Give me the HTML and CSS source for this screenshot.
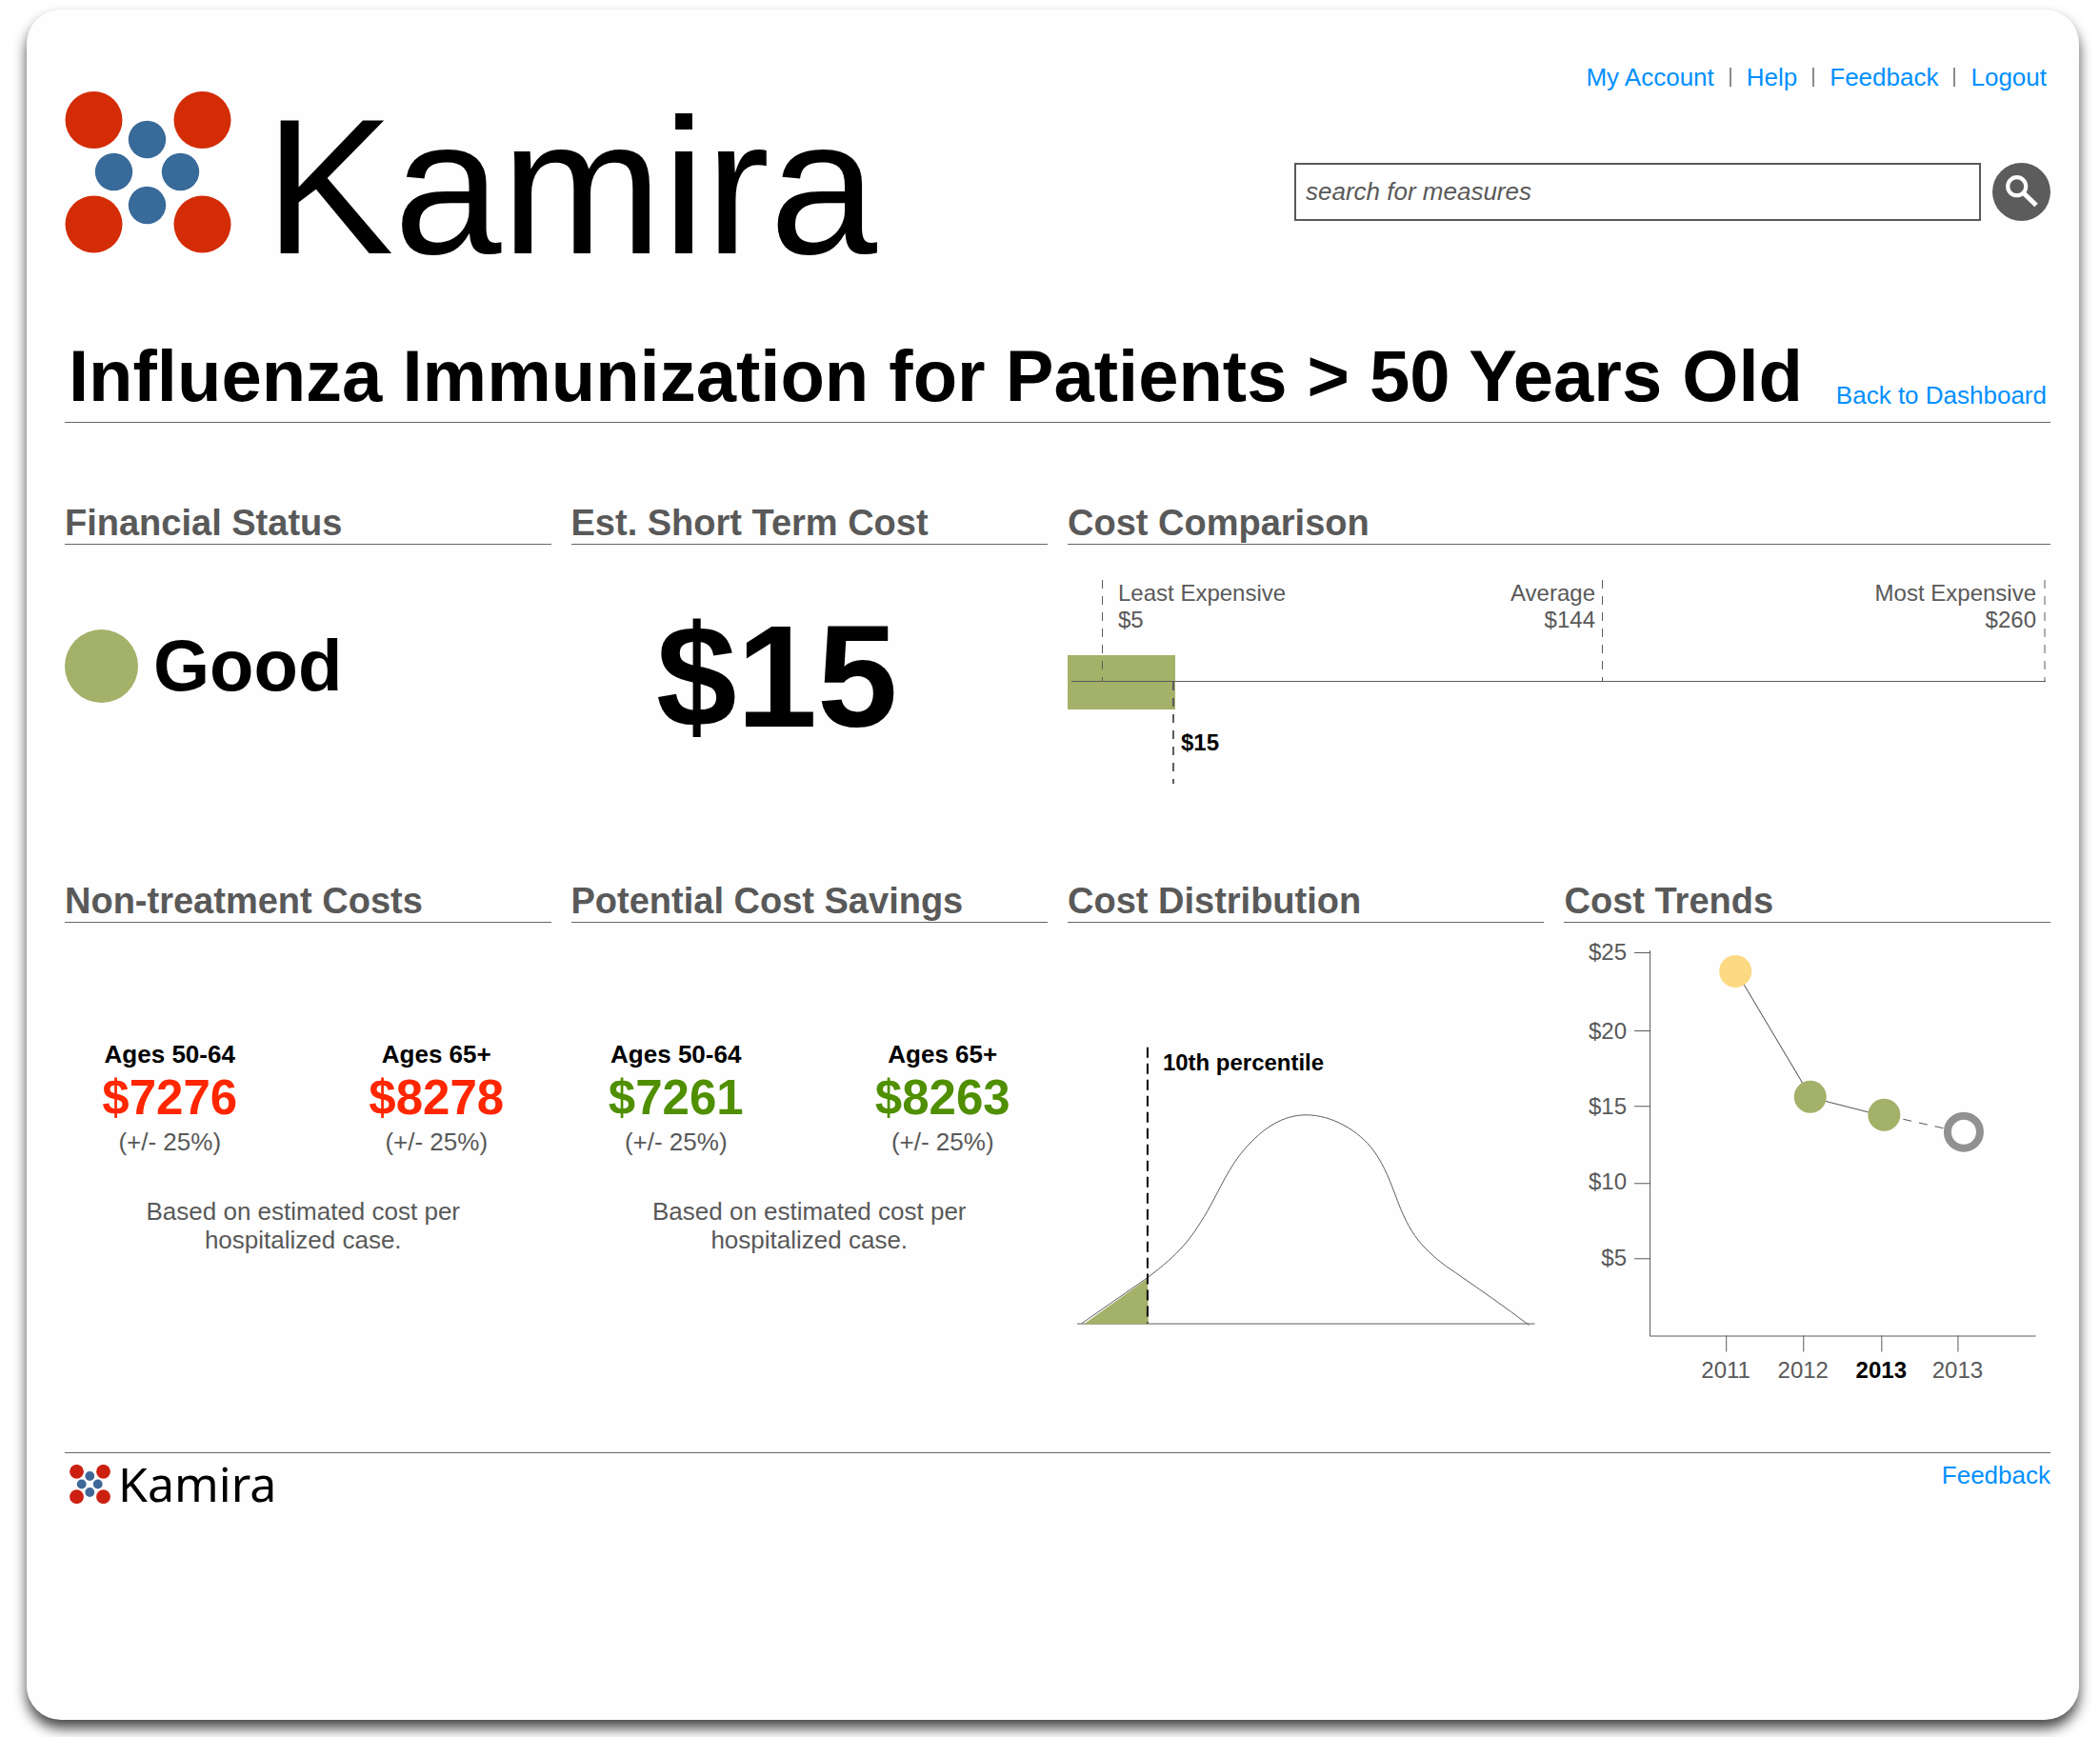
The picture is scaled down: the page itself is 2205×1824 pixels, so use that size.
FILE: index.html
```html
<!DOCTYPE html>
<html lang="en">
<head>
<meta charset="utf-8">
<meta name="viewport" content="width=device-width, initial-scale=1">
<title>Kamira</title>
<link rel="stylesheet" href="styles.css">
</head>
<body>
<div class="card">
  <header class="header">
    <div class="brand">
      <svg class="brand-mark" viewBox="0 0 176 170" aria-hidden="true">
        <g fill="#d32c06">
          <circle cx="30.500" cy="30" r="30"/><circle cx="144.500" cy="30" r="30"/>
          <circle cx="30.500" cy="139.500" r="30"/><circle cx="144.500" cy="139.500" r="30"/>
        </g>
        <g fill="#386a9a">
          <circle cx="86.500" cy="50.500" r="19.700"/><circle cx="51.500" cy="84.500" r="19.700"/>
          <circle cx="121.500" cy="84.500" r="19.700"/><circle cx="86.500" cy="119.500" r="19.700"/>
        </g>
      </svg>
      <span class="brand-name">Kamira</span>
    </div>
    <div class="tools">
      <nav aria-label="Account">
        <ul class="nav">
          <li><a href="#account">My Account</a></li>
          <li><a href="#help">Help</a></li>
          <li><a href="#feedback">Feedback</a></li>
          <li><a href="#logout">Logout</a></li>
        </ul>
      </nav>
      <form class="search" role="search">
        <input class="search-input" type="text" placeholder="search for measures" aria-label="Search for measures">
        <button class="search-button" type="submit" aria-label="Search">
          <svg viewBox="0 0 61 61" fill="none" stroke="#fff">
            <circle cx="25.700" cy="24.700" r="9.500" stroke-width="4.200"/>
            <path d="M32 31 L46 44.500" stroke-width="5"/>
          </svg>
        </button>
      </form>
    </div>
  </header>

  <main>
    <div class="title-row">
      <h1 class="title">Influenza Immunization for Patients &gt; 50 Years Old</h1>
      <a class="back" href="#dashboard">Back to Dashboard</a>
    </div>

    <div class="grid">
      <section>
        <h2 class="heading">Financial Status</h2>
        <div class="status"><span class="status-dot"></span>Good</div>
      </section>

      <section>
        <h2 class="heading">Est. Short Term Cost</h2>
        <div class="cost">$15</div>
      </section>

      <section class="wide">
        <h2 class="heading">Cost Comparison</h2>
        <svg class="chart" viewBox="0 0 1032 252" role="img" aria-label="Cost comparison">
          <rect class="good" x="0" y="116" width="113" height="57"/>
          <path class="line dashed" d="M36.500 37V144M561.500 37V144M1026 37V144"/>
          <path class="line" d="M4 143.500H1027"/>
          <path class="line dashed strong" d="M111 144V251"/>
          <text x="53" y="59">Least Expensive</text>
          <text x="53" y="87">$5</text>
          <text class="end" x="554" y="59">Average</text>
          <text class="end" x="554" y="87">$144</text>
          <text class="end" x="1017" y="59">Most Expensive</text>
          <text class="end" x="1017" y="87">$260</text>
          <text class="bold" x="119" y="216">$15</text>
        </svg>
      </section>

      <section>
        <h2 class="heading">Non-treatment Costs</h2>
        <div class="estimate narrow">
          <div class="figures">
            <div class="figure"><div class="group">Ages 50-64</div><div class="amount loss">$7276</div><div>(+/- 25%)</div></div>
            <div class="figure"><div class="group">Ages 65+</div><div class="amount loss">$8278</div><div>(+/- 25%)</div></div>
          </div>
          <p class="note">Based on estimated cost per hospitalized case.</p>
        </div>
      </section>

      <section>
        <h2 class="heading">Potential Cost Savings</h2>
        <div class="estimate">
          <div class="figures">
            <div class="figure"><div class="group">Ages 50-64</div><div class="amount gain">$7261</div><div>(+/- 25%)</div></div>
            <div class="figure"><div class="group">Ages 65+</div><div class="amount gain">$8263</div><div>(+/- 25%)</div></div>
          </div>
          <p class="note">Based on estimated cost per hospitalized case.</p>
        </div>
      </section>

      <section>
        <h2 class="heading">Cost Distribution</h2>
        <svg class="chart" viewBox="0 0 501 440" role="img" aria-label="Cost distribution">
          <path class="line" d="M10 421.500H491"/>
          <path class="line" d="M15 421L84 373C118 347 128 335 147 303C160 280 170 256 186 238C205 216 226 202 251 202C277 202 306 218 322 240C334 257 339 272 347 293C355 314 362 326 372 338C382 349 394 359 408 368C434 386 460 404 485 423"/>
          <path class="good" d="M17 422L84 374L85 422Z"/>
          <path class="marker" d="M84 131V421"/>
          <text class="bold" x="100" y="155">10th percentile</text>
        </svg>
      </section>

      <section>
        <h2 class="heading">Cost Trends</h2>
        <svg class="chart" viewBox="-1 0 510 484" role="img" aria-label="Cost trends">
          <path class="line" d="M89.500 29V433.500H494"/>
          <path class="line" d="M73 31.500H90M73 113.500H90M73 192.500H90M73 273.500H90M73 352.500H90"/>
          <path class="line" d="M169.500 433V450M250.500 433V450M332.500 433V450M412.500 433V450"/>
          <path class="line" d="M188 65L250 169M273 187L320 199"/>
          <path class="line dashed" d="M355 206L399 216"/>
          <circle class="fair" cx="179" cy="51" r="17"/>
          <circle class="good" cx="257.500" cy="182.500" r="17"/>
          <circle class="good" cx="335" cy="201.500" r="17"/>
          <circle class="forecast" cx="418.500" cy="219.500" r="17"/>
          <g class="end">
            <text x="65" y="39">$25</text>
            <text x="65" y="122">$20</text>
            <text x="65" y="201">$15</text>
            <text x="65" y="280">$10</text>
            <text x="65" y="360">$5</text>
          </g>
          <g class="mid">
            <text x="169" y="478">2011</text>
            <text x="250" y="478">2012</text>
            <text class="bold" x="332" y="478">2013</text>
            <text x="412" y="478">2013</text>
          </g>
        </svg>
      </section>
    </div>
  </main>

  <footer class="footer">
    <div class="footer-brand">
      <svg class="footer-mark" viewBox="0 0 43 41" aria-hidden="true">
        <g fill="#cc2111">
          <circle cx="7.500" cy="7.300" r="7.400"/><circle cx="35.500" cy="7.300" r="7.400"/>
          <circle cx="7.500" cy="33.700" r="7.400"/><circle cx="35.500" cy="33.700" r="7.400"/>
        </g>
        <g fill="#3f6899">
          <circle cx="21.300" cy="12" r="4.900"/><circle cx="12.700" cy="20.500" r="4.900"/>
          <circle cx="29.700" cy="20.500" r="4.900"/><circle cx="21.300" cy="29" r="4.900"/>
        </g>
      </svg>
      <span>Kamira</span>
    </div>
    <a href="#feedback">Feedback</a>
  </footer>
</div>
</body>
</html>
```
FILE: styles.css
```css
* { box-sizing: border-box; }

body {
  margin: 0;
  min-height: 100vh;
  display: flex;
  padding: 10px 22px 18px 28px;
  background: #fff;
  color: #595959;
  font: 26px/30px "Liberation Sans", Arial, Helvetica, sans-serif;
}

a { color: #0090ff; text-decoration: none; }
a:hover { text-decoration: underline; }

.card {
  flex: 1;
  min-width: 0;
  padding: 56px 30px 40px 40px;
  background: #fefefe;
  border-radius: 36px;
  box-shadow: 0 9px 14px rgba(0, 0, 0, 0.72);
}

/* Header */
.header { display: flex; justify-content: space-between; gap: 40px; }
.brand { display: flex; gap: 34px; margin-top: 30px; }
.brand-mark { width: 176px; height: 170px; flex: none; }
.brand-name { color: #000; font-size: 203px; line-height: 200px; }

.tools { flex: 0 1 794px; }
.nav {
  display: flex;
  justify-content: flex-end;
  margin: 0;
  padding: 0 4px 0 0;
  list-style: none;
  white-space: nowrap;
}
.nav li { display: flex; align-items: center; }
.nav li + li::before {
  content: "";
  width: 2px;
  height: 20px;
  margin: 0 16px;
  background: #8a8a8a;
}

.search { display: flex; gap: 12px; margin-top: 75px; }
.search-input {
  flex: 1;
  min-width: 0;
  height: 61px;
  padding: 0 10px;
  border: 2px solid #595959;
  border-radius: 0;
  background: #fff;
  color: #595959;
  font: italic 26px/30px "Liberation Sans", Arial, Helvetica, sans-serif;
}
.search-input::placeholder { color: #595959; opacity: 1; }
.search-button {
  flex: none;
  width: 61px;
  height: 61px;
  padding: 0;
  border: 0;
  border-radius: 50%;
  background: #5c5c5c;
  cursor: pointer;
}
.search-button svg { display: block; width: 100%; }

/* Title */
.title-row {
  display: flex;
  justify-content: space-between;
  align-items: flex-end;
  margin: 56px 0 83px;
  padding: 0 4px 5px;
  border-bottom: 1px solid #666;
}
.title { margin: 0; color: #000; font-size: 76px; line-height: 86px; }
.back { margin-bottom: 8px; white-space: nowrap; }

/* Panels */
.grid {
  display: grid;
  grid-template-columns: 51fr 50fr 50fr 51fr;
  gap: 100px 21px;
}
.grid > section { min-width: 0; }
.wide { grid-column: span 2; }
.heading {
  margin: 0;
  border-bottom: 1px solid #666;
  font-size: 38px;
  line-height: 44px;
}

.status {
  display: flex;
  align-items: center;
  gap: 16px;
  padding-top: 84px;
  color: #000;
  font-size: 76px;
  font-weight: bold;
  line-height: 86px;
}
.status-dot { width: 77px; height: 77px; border-radius: 50%; background: #a3b169; }

.cost {
  padding: 52px 68px 0 0;
  color: #000;
  font-size: 152px;
  font-weight: bold;
  line-height: 172px;
  text-align: center;
}

.estimate { padding-top: 123px; text-align: center; }
.narrow { padding-right: 10px; }
.figures { display: flex; justify-content: center; gap: 130px; }
.figure { width: 150px; white-space: nowrap; }
.group { color: #000; font-weight: bold; }
.amount { font-size: 51px; font-weight: bold; line-height: 62px; }
.loss { color: #ff2600; }
.gain { color: #4f8f00; }
.note { max-width: 350px; margin: 43px auto 0; }

/* Charts */
.chart { display: block; width: 100%; font-size: 24px; fill: #595959; }
.line { fill: none; stroke: #5c5c5c; stroke-width: 1px; }
.dashed { stroke-dasharray: 9 8; }
.strong { stroke: #5c5c5c; stroke-width: 2px; }
.marker { stroke: #000; stroke-width: 2px; stroke-dasharray: 11 6; }
.good { fill: #a3b169; }
.fair { fill: #fcd983; }
.forecast { fill: #fefefe; stroke: #919191; stroke-width: 8px; }
.end { text-anchor: end; }
.mid { text-anchor: middle; }
.bold { fill: #000; font-weight: bold; }

/* Footer */
.footer {
  display: flex;
  justify-content: space-between;
  align-items: flex-start;
  margin-top: 72px;
  padding-top: 8px;
  border-top: 1px solid #666;
}
.footer-brand {
  display: flex;
  align-items: center;
  gap: 8px;
  padding-left: 5px;
  color: #000;
  font: 50px/48px "Noto Sans", "Open Sans", sans-serif;
}
.footer-mark { width: 43px; height: 41px; }
```
